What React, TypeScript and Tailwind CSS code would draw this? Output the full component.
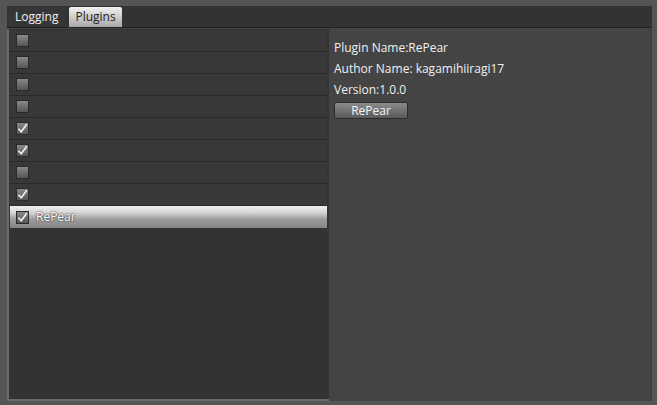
import React from "react";

const plugins = [
  { name: "", checked: false },
  { name: "", checked: false },
  { name: "", checked: false },
  { name: "", checked: false },
  { name: "", checked: true },
  { name: "", checked: true },
  { name: "", checked: false },
  { name: "", checked: true },
  { name: "RePear", checked: true },
];

const CheckBox: React.FC<{ checked: boolean }> = ({ checked }) => (
  <div className="w-[13px] h-[13px] border border-[#2a2a2a] bg-gradient-to-b from-[#8a8a8a] to-[#555] flex items-center justify-center">
    {checked && (
      <svg width="11" height="11" viewBox="0 0 11 11">
        <path d="M1.5 5.8 L4.2 8.8 L9.8 1.2" fill="none" stroke="#f2f2f2" strokeWidth="1.6" />
      </svg>
    )}
  </div>
);

export default function App() {
  const selected = 8;
  return (
    <div
      className="w-[657px] h-[405px] bg-[#555555] pt-[6px] pl-[7px] pr-[5px] pb-[4px] text-[12px]"
      style={{ fontFamily: '"Open Sans", "Liberation Sans", sans-serif' }}
    >
      <div className="h-full flex flex-col">
        {/* Tabs */}
        <div className="h-[22px] bg-[#333333] border-b border-[#222] flex items-center gap-[4px] pl-[1px]">
          <div className="h-[19px] px-[7px] flex items-center text-[#f0f0f0] bg-[#363636]">Logging</div>
          <div className="h-[20px] px-[6px] flex items-center text-[#1e1e1e] rounded-t-[2px] bg-gradient-to-b from-[#f2f2f2] to-[#a8a8a8]">
            Plugins
          </div>
        </div>

        {/* Content */}
        <div className="flex-1 flex bg-[#444444] pt-[1px]">
          <div className="w-[322px] bg-[#333333] border-l-2 border-b-2 border-[#6a6a6a] pt-[1px] pl-[1px] pr-[2px]">
            {plugins.map((p, i) =>
              i === selected ? (
                <div
                  key={i}
                  className="h-[22px] flex items-center gap-[7px] pl-[6px] bg-[linear-gradient(to_bottom,#f0f0f0_0%,#d6d6d6_30%,#9c9c9c_60%,#858585_100%)] text-white"
                >
                  <CheckBox checked={p.checked} />
                  <span className="[text-shadow:0_0_2px_#3a3a3a,0_0_1px_#3a3a3a]">{p.name}</span>
                </div>
              ) : (
                <div key={i} className="h-[22px] flex items-center gap-[7px] pl-[6px] border-b border-[#292929] bg-[#383838]">
                  <CheckBox checked={p.checked} />
                  <span className="text-white">{p.name}</span>
                </div>
              )
            )}
          </div>

          <div className="flex-1 pl-[5px] pt-[8px] text-[#f0f0f0] border-r border-[#3c3c3c]">
            <div className="h-[21px] flex items-center">Plugin Name:RePear</div>
            <div className="h-[21px] flex items-center">Author Name: kagamihiiragi17</div>
            <div className="h-[21px] flex items-center">Version:1.0.0</div>
            <button className="mt-[2px] w-[74px] h-[17px] flex items-center justify-center rounded-[2px] border border-[#2b2b2b] bg-gradient-to-b from-[#8c8c8c] to-[#5a5a5a] text-[#f4f4f4]">
              RePear
            </button>
          </div>
        </div>
      </div>
    </div>
  );
}
